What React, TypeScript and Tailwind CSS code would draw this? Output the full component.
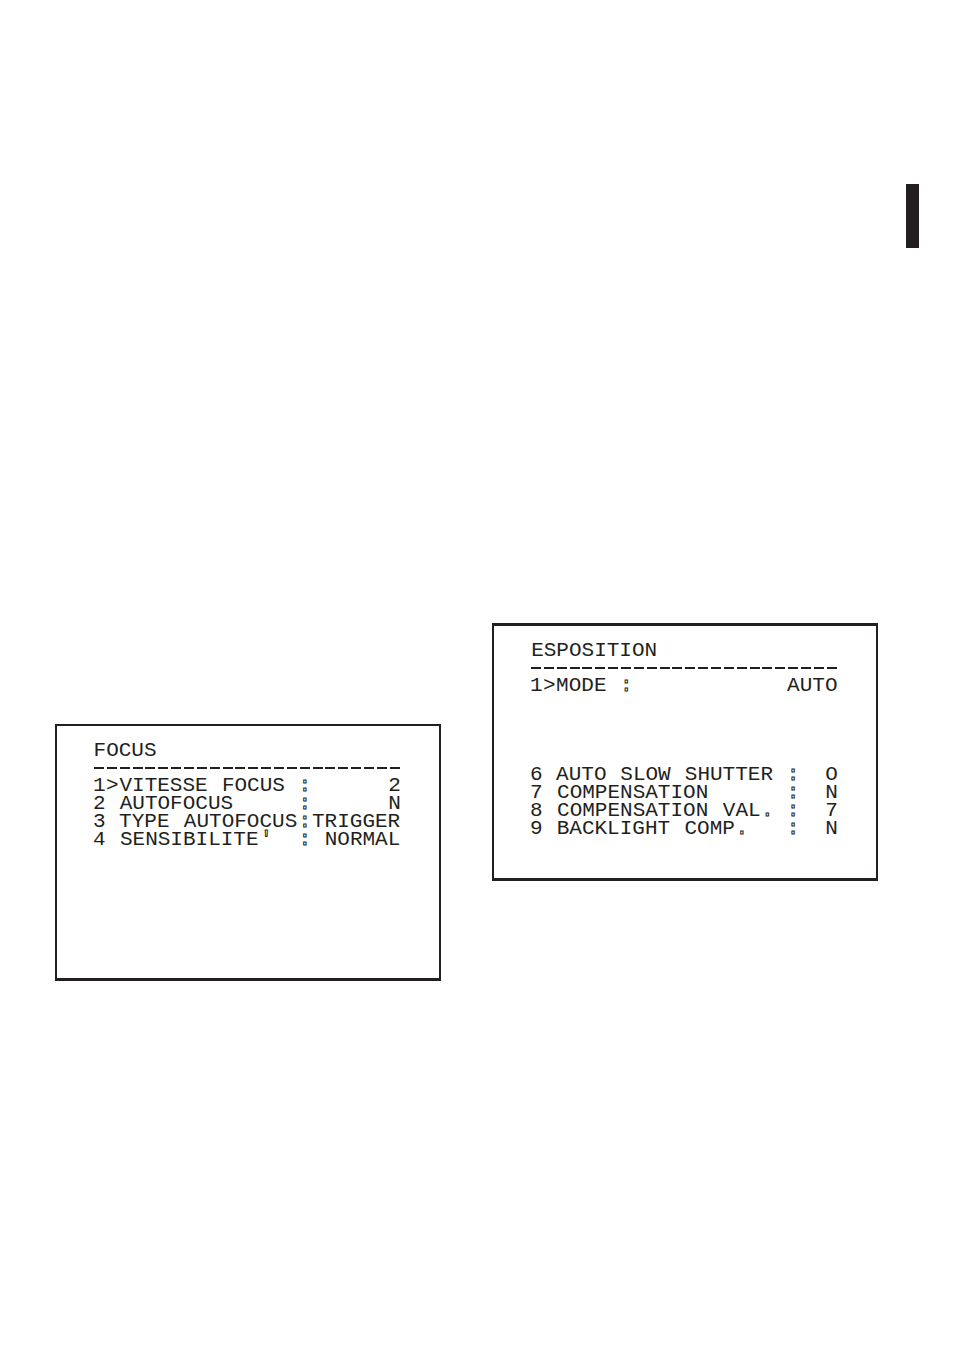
type Token = { text: string; start: number };

const COLUMNS = 24;

const focusRows = [
  "1>VITESSE FOCUS :      2",
  "2 AUTOFOCUS     :      N",
  "3 TYPE AUTOFOCUS:TRIGGER",
  "4 SENSIBILITE'  : NORMAL",
];

const modeRows = ["1>MODE :            AUTO"];

const exposureRows = [
  "6 AUTO SLOW SHUTTER :  O",
  "7 COMPENSATION      :  N",
  "8 COMPENSATION VAL. :  7",
  "9 BACKLIGHT COMP.   :  N",
];

function tokenize(line: string): Token[] {
  return Array.from(line.matchAll(/[^\s:.'>]+|[:.'>]/g), (m) => ({
    text: m[0],
    start: (m.index ?? 0) + 1,
  }));
}

// One line of the on-screen display, set on a grid of 24 character cells.
function Line({ text }: { text: string }) {
  return (
    <span className="grid h-[18px] grid-cols-[repeat(24,minmax(0,1fr))]">
      {tokenize(text).map((t) => (
        <span
          key={t.start}
          className={
            /^[:.']$/.test(t.text)
              ? "flex justify-center text-white [-webkit-text-stroke:1px_#231f20]"
              : "flex justify-center"
          }
          style={{ gridColumn: `${t.start} / span ${t.text.length}` }}
        >
          {t.text}
        </span>
      ))}
    </span>
  );
}

function DashedRule() {
  return (
    <div className="mt-[7px] mb-2 flex justify-between px-px" aria-hidden="true">
      {Array.from({ length: COLUMNS }, (_, i) => (
        <span key={i} className="h-0.5 w-2.5 bg-[#231f20]" />
      ))}
    </div>
  );
}

function Rows({ rows }: { rows: string[] }) {
  return (
    <ul>
      {rows.map((row) => (
        <li key={row}>
          <Line text={row} />
        </li>
      ))}
    </ul>
  );
}

export default function App() {
  return (
    <div className="flex min-h-screen items-start bg-white pr-[34px] pl-[55px] font-['Liberation_Mono',monospace] text-[21px] leading-[18px] text-[#231f20] antialiased">
      <main className="grid flex-1 grid-cols-2 items-start gap-[51px]">
        <section className="mt-[724px] min-h-[257px] border-2 border-b-3 border-[#231f20] pt-4 pr-[38px] pl-9">
          <h2>
            <Line text="FOCUS" />
          </h2>
          <DashedRule />
          <Rows rows={focusRows} />
        </section>
        <section className="mt-[623px] min-h-[258px] border-x-2 border-y-3 border-[#231f20] pt-4 pr-[38px] pl-9">
          <h2>
            <Line text="ESPOSITION" />
          </h2>
          <DashedRule />
          <Rows rows={modeRows} />
          <div className="mt-[71px]">
            <Rows rows={exposureRows} />
          </div>
        </section>
      </main>
      <aside className="mt-[184px] ml-7 h-16 w-[13px] bg-[#231f20]" />
    </div>
  );
}
